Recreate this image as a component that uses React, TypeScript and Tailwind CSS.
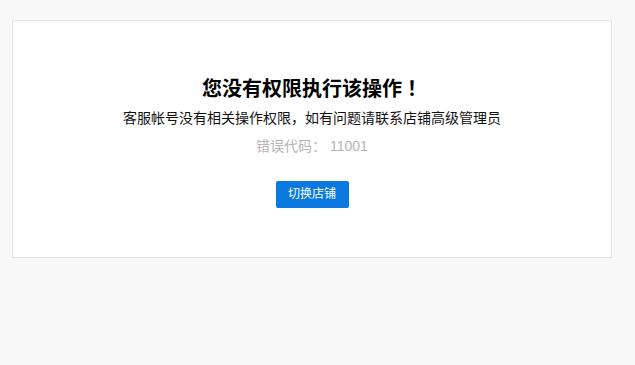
export default function App() {
  return (
    <div
      className="min-h-screen bg-[#f8f8f8] pt-[20px] pl-[12px] [text-spacing-trim:space-all]"
      style={{ fontFamily: '"Liberation Sans", "Noto Sans CJK SC", sans-serif' }}
    >
      <div className="w-[600px] h-[238px] bg-white border border-[#e3e3e3] flex flex-col items-center pt-[55px]">
        <h1 className="text-[20px] leading-[24px] font-bold text-black">
          您没有权限执行该操作
          <span className="font-['Noto_Sans_CJK_JP',sans-serif]">！</span>
        </h1>
        <p className="mt-[7px] text-[14px] leading-[20px] text-[#111]">客服帐号没有相关操作权限，如有问题请联系店铺高级管理员</p>
        <p className="mt-[8px] text-[14px] leading-[20px] text-[#b5b5b5]">错误代码： 11001</p>
        <button className="mt-[25px] w-[73px] h-[27px] rounded-[2px] bg-[#0b79e0] text-white text-[12px] leading-[27px]">
          切换店铺
        </button>
      </div>
    </div>
  );
}
